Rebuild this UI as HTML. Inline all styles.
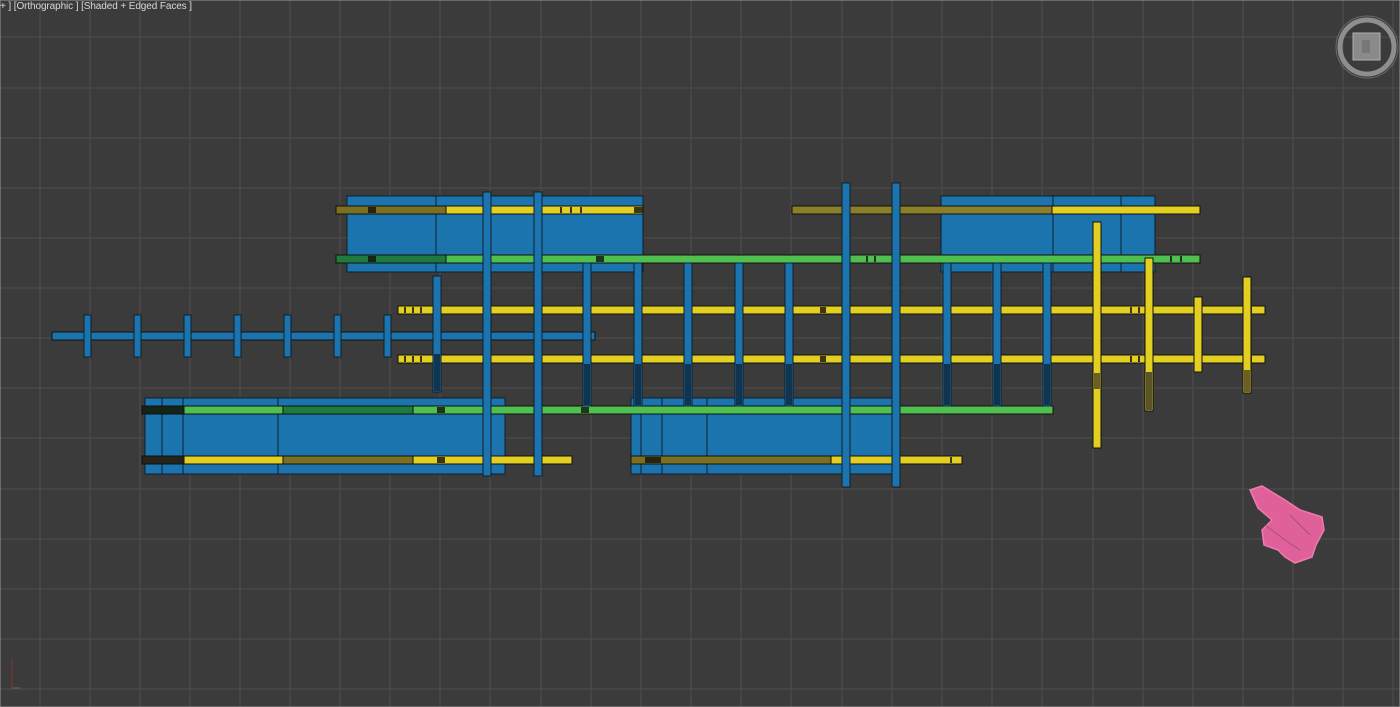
<!DOCTYPE html>
<html><head><meta charset="utf-8"><style>
html,body{margin:0;padding:0;background:#3b3b3b;width:1400px;height:707px;overflow:hidden}
.lbl{position:absolute;left:0;top:1px;font:10px "Liberation Sans",sans-serif;color:#d8d8d8;white-space:pre;letter-spacing:-0.1px}
svg{position:absolute;left:0;top:0}
</style></head><body>
<svg width="1400" height="707" xmlns="http://www.w3.org/2000/svg">
<rect width="1400" height="707" fill="#3b3b3b"/>
<g stroke="#4b4b4b" stroke-width="1.3">
<line x1="40" y1="0" x2="40" y2="707"/><line x1="90" y1="0" x2="90" y2="707"/><line x1="140" y1="0" x2="140" y2="707"/><line x1="190" y1="0" x2="190" y2="707"/><line x1="240" y1="0" x2="240" y2="707"/><line x1="290" y1="0" x2="290" y2="707"/><line x1="340" y1="0" x2="340" y2="707"/><line x1="390" y1="0" x2="390" y2="707"/><line x1="440" y1="0" x2="440" y2="707"/><line x1="490" y1="0" x2="490" y2="707"/><line x1="541" y1="0" x2="541" y2="707"/><line x1="591" y1="0" x2="591" y2="707"/><line x1="641" y1="0" x2="641" y2="707"/><line x1="691" y1="0" x2="691" y2="707"/><line x1="741" y1="0" x2="741" y2="707"/><line x1="791" y1="0" x2="791" y2="707"/><line x1="842" y1="0" x2="842" y2="707"/><line x1="892" y1="0" x2="892" y2="707"/><line x1="942" y1="0" x2="942" y2="707"/><line x1="992" y1="0" x2="992" y2="707"/><line x1="1042" y1="0" x2="1042" y2="707"/><line x1="1093" y1="0" x2="1093" y2="707"/><line x1="1143" y1="0" x2="1143" y2="707"/><line x1="1193" y1="0" x2="1193" y2="707"/><line x1="1243" y1="0" x2="1243" y2="707"/><line x1="1293" y1="0" x2="1293" y2="707"/><line x1="1343" y1="0" x2="1343" y2="707"/><line x1="1393" y1="0" x2="1393" y2="707"/>
<line x1="0" y1="37" x2="1400" y2="37"/><line x1="0" y1="88" x2="1400" y2="88"/><line x1="0" y1="138" x2="1400" y2="138"/><line x1="0" y1="188" x2="1400" y2="188"/><line x1="0" y1="238" x2="1400" y2="238"/><line x1="0" y1="288" x2="1400" y2="288"/><line x1="0" y1="338" x2="1400" y2="338"/><line x1="0" y1="388" x2="1400" y2="388"/><line x1="0" y1="438" x2="1400" y2="438"/><line x1="0" y1="489" x2="1400" y2="489"/><line x1="0" y1="539" x2="1400" y2="539"/><line x1="0" y1="589" x2="1400" y2="589"/><line x1="0" y1="639" x2="1400" y2="639"/><line x1="0" y1="689" x2="1400" y2="689"/>
</g>
<rect x="0" y="0" width="1400" height="707" fill="none" stroke="#9a9a9a" stroke-width="1"/>
<g fill="#1c74ae" stroke="#0e1e2c" stroke-width="1">
<rect x="347" y="196" width="296" height="76"/><line x1="436" y1="196" x2="436" y2="272"/>
<rect x="941" y="196" width="214" height="76"/><line x1="1053" y1="196" x2="1053" y2="272"/><line x1="1121" y1="196" x2="1121" y2="272"/>
<rect x="145" y="398" width="360" height="76"/><line x1="162" y1="398" x2="162" y2="474"/><line x1="183" y1="398" x2="183" y2="474"/><line x1="278" y1="398" x2="278" y2="474"/>
<rect x="631" y="398" width="262" height="76"/><line x1="641" y1="398" x2="641" y2="474"/><line x1="662" y1="398" x2="662" y2="474"/><line x1="707" y1="398" x2="707" y2="474"/>
</g>
<g stroke="#111" stroke-width="1">
<rect x="336" y="206" width="307" height="8" fill="#e2cf22"/>
<rect x="336" y="206" width="110" height="8" fill="#7a7020"/>
<rect x="792" y="206" width="408" height="8" fill="#e2cf22"/>
<rect x="792" y="206" width="260" height="8" fill="#8a7e28"/>
<rect x="336" y="255" width="864" height="8" fill="#4fc050"/>
<rect x="336" y="255" width="110" height="8" fill="#1f7a3d"/>
<rect x="398" y="306" width="867" height="8" fill="#e2cf22"/>
<rect x="52" y="332" width="543" height="8" fill="#1c74ae"/>
<rect x="398" y="355" width="867" height="8" fill="#e2cf22"/>
<rect x="142" y="406" width="911" height="8" fill="#4fc050"/>
<rect x="142" y="406" width="42" height="8" fill="#142418"/>
<rect x="283" y="406" width="130" height="8" fill="#1f7a3d"/>
<rect x="142" y="456" width="430" height="8" fill="#e2cf22"/>
<rect x="142" y="456" width="42" height="8" fill="#24241a"/>
<rect x="283" y="456" width="130" height="8" fill="#7a7020"/>
<rect x="631" y="456" width="331" height="8" fill="#e2cf22"/>
<rect x="631" y="456" width="200" height="8" fill="#7a7020"/>
</g>
<g fill="#111" opacity="0.8">
<rect x="368" y="207" width="8" height="6"/><rect x="560" y="207" width="2" height="6"/><rect x="570" y="207" width="2" height="6"/><rect x="580" y="207" width="2" height="6"/><rect x="634" y="207" width="9" height="6"/>
<rect x="368" y="256" width="8" height="6"/><rect x="596" y="256" width="8" height="6"/><rect x="866" y="256" width="2" height="6"/><rect x="874" y="256" width="2" height="6"/><rect x="1170" y="256" width="2" height="6"/><rect x="1180" y="256" width="2" height="6"/>
<rect x="404" y="307" width="2" height="6"/><rect x="412" y="307" width="2" height="6"/><rect x="420" y="307" width="2" height="6"/><rect x="820" y="307" width="6" height="6"/><rect x="1130" y="307" width="2" height="6"/><rect x="1138" y="307" width="2" height="6"/><rect x="1250" y="307" width="2" height="6"/>
<rect x="404" y="356" width="2" height="6"/><rect x="412" y="356" width="2" height="6"/><rect x="420" y="356" width="2" height="6"/><rect x="820" y="356" width="6" height="6"/><rect x="1130" y="356" width="2" height="6"/><rect x="1138" y="356" width="2" height="6"/><rect x="1250" y="356" width="2" height="6"/>
<rect x="437" y="407" width="8" height="6"/><rect x="581" y="407" width="8" height="6"/><rect x="437" y="457" width="8" height="6"/><rect x="645" y="457" width="16" height="6"/><rect x="950" y="457" width="2" height="6"/>
</g>
<g fill="#1c74ae" stroke="#0e1e2c">
<rect x="84" y="315" width="7" height="42"/><rect x="134" y="315" width="7" height="42"/><rect x="184" y="315" width="7" height="42"/><rect x="234" y="315" width="7" height="42"/><rect x="284" y="315" width="7" height="42"/><rect x="334" y="315" width="7" height="42"/><rect x="384" y="315" width="7" height="42"/>
</g>
<g stroke="#0e1e2c" stroke-width="1">
<rect x="483" y="192" width="8" height="284" fill="#1c74ae"/>
<rect x="534" y="192" width="8" height="284" fill="#1c74ae"/>
<rect x="842" y="183" width="8" height="304" fill="#1c74ae"/>
<rect x="892" y="183" width="8" height="304" fill="#1c74ae"/>
<rect x="433" y="276" width="8" height="116" fill="#1c74ae"/>
<rect x="583" y="263" width="8" height="143" fill="#1c74ae"/>
<rect x="634" y="263" width="8" height="143" fill="#1c74ae"/>
<rect x="684" y="263" width="8" height="143" fill="#1c74ae"/>
<rect x="735" y="263" width="8" height="143" fill="#1c74ae"/>
<rect x="785" y="263" width="8" height="143" fill="#1c74ae"/>
<rect x="943" y="263" width="8" height="143" fill="#1c74ae"/>
<rect x="993" y="263" width="8" height="143" fill="#1c74ae"/>
<rect x="1043" y="263" width="8" height="143" fill="#1c74ae"/>
</g>
<g fill="#0d2a40" opacity="0.85">
<rect x="434" y="354" width="6" height="37"/><rect x="584" y="364" width="6" height="41"/><rect x="635" y="364" width="6" height="41"/><rect x="685" y="364" width="6" height="41"/><rect x="736" y="364" width="6" height="41"/><rect x="786" y="364" width="6" height="41"/><rect x="944" y="364" width="6" height="41"/><rect x="994" y="364" width="6" height="41"/><rect x="1044" y="364" width="6" height="41"/>
</g>
<g stroke="#111" stroke-width="1">
<rect x="1093" y="222" width="8" height="226" fill="#e2cf22"/>
<rect x="1094" y="373" width="6" height="16" fill="#6a6024" stroke="none"/>
<rect x="1145" y="258" width="8" height="153" fill="#e2cf22"/>
<rect x="1146" y="372" width="6" height="38" fill="#5a5424" stroke="none"/>
<rect x="1194" y="297" width="8" height="75" fill="#e2cf22"/>
<rect x="1243" y="277" width="8" height="116" fill="#e2cf22"/>
<rect x="1244" y="370" width="6" height="22" fill="#6a6024" stroke="none"/>
</g>
<path d="M1250 490 L1262 486 L1285 500 L1300 510 L1322 517 L1324 530 L1316 545 L1312 557 L1295 563 L1285 557 L1278 550 L1264 545 L1262 530 L1272 520 L1258 508 Z" fill="#e0609a" stroke="#f07ab0" stroke-width="1.5"/>
<path d="M1265 525 L1285 540 L1300 550 M1290 515 L1310 535" stroke="#7a4a60" stroke-width="1" fill="none" opacity="0.6"/>
<circle cx="1367" cy="47" r="27" fill="none" stroke="#8e8e8e" stroke-width="5"/>
<circle cx="1367" cy="47" r="31" fill="none" stroke="#6a6a6a" stroke-width="1"/>
<rect x="1353" y="33" width="27" height="27" fill="#8a8a8a" stroke="#b0b0b0"/>
<rect x="1362" y="40" width="8" height="13" fill="#777"/>
<line x1="12" y1="688" x2="12" y2="660" stroke="#8a3030" stroke-width="1"/>
<line x1="12" y1="688" x2="20" y2="688" stroke="#308a30" stroke-width="1"/>
</svg>
<div class="lbl">+ ] [Orthographic ] [Shaded + Edged Faces ]</div>
</body></html>
